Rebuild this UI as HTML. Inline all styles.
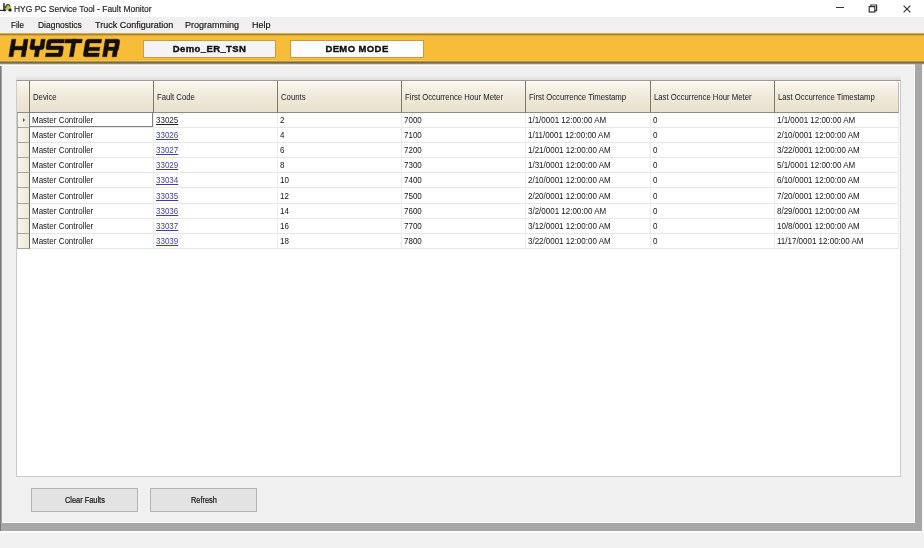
<!DOCTYPE html>
<html><head><meta charset="utf-8">
<style>
*{margin:0;padding:0;box-sizing:border-box}
html,body{width:924px;height:548px;overflow:hidden;background:#f0f0f0;font-family:"Liberation Sans",sans-serif;color:#000}
body{position:relative}
#root{position:absolute;left:0;top:0;width:924px;height:548px;overflow:hidden;background:#f0f0f0;will-change:transform}
.abs,.hdr,.rh,.cell,.focus,.btn{position:absolute}
#title{left:0;top:0;width:924px;height:17px;background:#fff}
#title .t{left:14px;top:4px;font-size:9px;white-space:nowrap;color:#1a1a1a;transform-origin:0 0;transform:scaleX(0.94);-webkit-text-stroke:0.15px #1a1a1a}
#menu{left:0;top:17px;width:924px;height:15px;background:#f0f0f0}
#menu span{position:absolute;top:3px;font-size:9px;white-space:nowrap;color:#111;transform-origin:0 0;-webkit-text-stroke:0.15px #111}
#ybar{left:0;top:32px;width:924px;height:34px;background:linear-gradient(#f6f1e4 0px,#f6f1e4 1px,#d2ab5a 1px,#d2ab5a 2px,#a8822f 2px,#a8822f 3px,#d9a836 3px,#d9a836 4px,#f7bd38 4px,#f7bd38 27px,#f4b52f 27px,#f4b52f 28px,#efc75c 28px,#efc75c 29px,#b09548 29px,#b09548 30px,#7a6a3e 30px,#7a6a3e 31px,#958667 31px,#958667 32px,#dcdad4 32px,#dcdad4 33px,#fafafa 33px,#fafafa 34px)}
.box{position:absolute;top:8px;height:18px;font-weight:bold;font-size:9.5px;letter-spacing:0.4px;text-align:center;line-height:16.5px;color:#111;-webkit-text-stroke:0.4px #111}
#gridbg{left:16px;top:80px;width:885px;height:397px;background:#fff;border:1px solid #cbcbcb;border-top-color:#9a9a9a}
.hdr{box-shadow:inset 0 1px 0 #fffdf8;background:linear-gradient(#fbf8f0,#f0e9d9 50%,#e9e1cf);border-right:1px solid #7d786a;border-bottom:1px solid #8f8b7d}
.hdr span{position:absolute;left:3px;top:10.5px;font-size:8.7px;white-space:nowrap;color:#1a1a1a;transform-origin:0 0;transform:scaleX(0.89)}
.cell{border-right:1px solid #ececec;border-bottom:1px solid #e6e6e6}
.cell span{position:absolute;left:2px;bottom:3px;font-size:8.5px;line-height:8px;white-space:nowrap;color:#141414;transform-origin:0 0;transform:scaleX(0.94)}
.rh{box-shadow:inset 1px 0 0 #b4b0a4;background:linear-gradient(90deg,#f8f5ee,#ede8da);border-right:1px solid #6f6b5f;border-bottom:1px solid #a9a597}
.arr{position:absolute;left:5.5px;top:4.5px;width:0;height:0;border-left:2.5px solid #555;border-top:2.2px solid transparent;border-bottom:2.2px solid transparent}
.focus{border:1px solid #808080}
a{color:#4040aa;text-decoration:underline}
a.v{color:#222}
.btn{top:488px;width:107px;height:24px;background:#e3e3e3;border:1px solid #b4b4b4;font-size:8.5px;text-align:center;line-height:22px;color:#222}
.btn span{display:inline-block;transform:scaleX(0.87);color:#111;-webkit-text-stroke:0.2px #111}

.hdr.first{border-top-left-radius:3px}
.hdr.last{border-top-right-radius:3px;border-right-color:#bdb9ad}

</style></head><body>
<div id="root">
<div id="title" class="abs">
  <svg class="abs" style="left:0;top:0" width="14" height="17" viewBox="0 0 14 17">
    <rect x="0" y="9.8" width="4" height="1.2" fill="#333"/>
    <rect x="3" y="3.2" width="2" height="7.6" fill="#555"/>
    <path d="M5 6 H9.5 L11.5 8 V10.5 H5 Z" fill="#c2cf4a"/>
    <path d="M5.6 8.2 Q6 4.5 8.2 4.6 Q9.8 4.8 10 6.8" fill="none" stroke="#2a2a10" stroke-width="1.1"/>
    <circle cx="10" cy="10" r="1.6" fill="#111"/>
    <circle cx="4.6" cy="10.2" r="1.2" fill="#222"/>
  </svg>
  <div class="abs t">HYG PC Service Tool - Fault Monitor</div>
  <div class="abs" style="left:836px;top:6.8px;width:8px;height:1.4px;background:#333"></div>
  <svg class="abs" style="left:868px;top:4px" width="10" height="9" viewBox="0 0 10 9"><rect x="1.2" y="2.6" width="5.6" height="5.4" fill="none" stroke="#333" stroke-width="1.2"/><path d="M2.8 2.4 V1 H8.6 V6.6 H7" fill="none" stroke="#333" stroke-width="1.2"/></svg>
  <svg class="abs" style="left:903px;top:4.5px" width="8" height="8" viewBox="0 0 8 8"><path d="M0.6 0.6 L7.4 7.4 M7.4 0.6 L0.6 7.4" stroke="#333" stroke-width="1.2"/></svg>
</div>
<div id="menu" class="abs">
  <span style="left:11px;transform:scaleX(0.9)">File</span>
  <span style="left:38px;transform:scaleX(0.94)">Diagnostics</span>
  <span style="left:95px">Truck Configuration</span>
  <span style="left:185px">Programming</span>
  <span style="left:252px">Help</span>
</div>
<div id="ybar" class="abs">
  <div class="box" style="left:143px;width:133px;background:#f4f3f6;border:1px solid #c99a3e">Demo_ER_TSN</div>
  <div class="box" style="left:290px;width:134px;background:#fdfdfd;border:1px solid #c99a3e">DEMO MODE</div>
</div>
<svg class="abs" style="left:0;top:0" width="130" height="63" viewBox="0 0 130 63">
  <g transform="matrix(1 0 -0.165 1 9.405 0)" fill="#150e06" stroke="#150e06" stroke-width="0.35">
    <rect x="8.8" y="39.2" width="4.2" height="17.6"/><rect x="21" y="39.2" width="4.2" height="17.6"/><rect x="8.8" y="46.3" width="16.4" height="3.7"/>
    <rect x="28.4" y="39.2" width="4" height="9"/><rect x="38.2" y="39.2" width="4.2" height="9"/><path d="M28.4 46 H42.4 V47.5 Q42.4 49.7 40.2 49.7 H30.6 Q28.4 49.7 28.4 47.5 Z"/><rect x="34.1" y="48" width="4.3" height="8.8"/>
    <path d="M47 39.2 H61.5 V42.9 H48.7 V46 H60 Q62 46 62 48 V54.8 Q62 56.8 60 56.8 H45.3 V53.1 H57.8 V49.7 H46.5 Q44.5 49.7 44.5 47.7 V41.7 Q44.5 39.2 47 39.2 Z"/>
    <rect x="62.3" y="39.2" width="17.1" height="3.8"/><rect x="69.3" y="39.2" width="4.1" height="17.6"/>
    <path d="M85.4 39.2 H98.8 V43 H87.3 V47.2 H98.3 V50.8 H87.3 V53.1 H98.7 V56.8 H85.4 Q82.9 56.8 82.9 54.3 V41.7 Q82.9 39.2 85.4 39.2 Z"/>
    <path d="M102.4 39.2 H114.7 Q117.2 39.2 117.2 41.7 V49 Q117.2 50.5 116.4 50.8 V56.8 H112 V50.5 H106.8 V56.8 H102.4 Z M106.8 43 V47 H112.9 V43 Z" fill-rule="evenodd"/>
  </g>
</svg>
<div class="abs" style="left:16px;top:75px;width:885px;height:5px;background:linear-gradient(#f0f0f0,#dedede)"></div>
<div id="gridbg" class="abs"></div>
<div class="hdr first" style="left:17px;top:81px;width:13px;height:32px"></div>
<div class="hdr" style="left:30px;top:81px;width:124px;height:32px"><span>Device</span></div>
<div class="hdr" style="left:154px;top:81px;width:124px;height:32px"><span>Fault Code</span></div>
<div class="hdr" style="left:278px;top:81px;width:124px;height:32px"><span>Counts</span></div>
<div class="hdr" style="left:402px;top:81px;width:124px;height:32px"><span>First Occurrence Hour Meter</span></div>
<div class="hdr" style="left:526px;top:81px;width:125px;height:32px"><span>First Occurrence Timestamp</span></div>
<div class="hdr" style="left:651px;top:81px;width:124px;height:32px"><span>Last Occurrence Hour Meter</span></div>
<div class="hdr last" style="left:775px;top:81px;width:124px;height:32px"><span>Last Occurrence Timestamp</span></div>
<div class="rh" style="left:17px;top:113px;width:13px;height:15px"><i class="arr"></i></div>
<div class="cell" style="left:30px;top:113px;width:124px;height:15px"><span style="left:1.5px">Master Controller</span></div>
<div class="cell" style="left:154px;top:113px;width:124px;height:15px"><span><a class="v">33025</a></span></div>
<div class="cell" style="left:278px;top:113px;width:124px;height:15px"><span>2</span></div>
<div class="cell" style="left:402px;top:113px;width:124px;height:15px"><span>7000</span></div>
<div class="cell" style="left:526px;top:113px;width:125px;height:15px"><span>1/1/0001 12:00:00 AM</span></div>
<div class="cell" style="left:651px;top:113px;width:124px;height:15px"><span>0</span></div>
<div class="cell" style="left:775px;top:113px;width:124px;height:15px"><span>1/1/0001 12:00:00 AM</span></div>
<div class="rh" style="left:17px;top:128px;width:13px;height:15px"></div>
<div class="cell" style="left:30px;top:128px;width:124px;height:15px"><span style="left:1.5px">Master Controller</span></div>
<div class="cell" style="left:154px;top:128px;width:124px;height:15px"><span><a class="">33026</a></span></div>
<div class="cell" style="left:278px;top:128px;width:124px;height:15px"><span>4</span></div>
<div class="cell" style="left:402px;top:128px;width:124px;height:15px"><span>7100</span></div>
<div class="cell" style="left:526px;top:128px;width:125px;height:15px"><span>1/11/0001 12:00:00 AM</span></div>
<div class="cell" style="left:651px;top:128px;width:124px;height:15px"><span>0</span></div>
<div class="cell" style="left:775px;top:128px;width:124px;height:15px"><span>2/10/0001 12:00:00 AM</span></div>
<div class="rh" style="left:17px;top:143px;width:13px;height:15px"></div>
<div class="cell" style="left:30px;top:143px;width:124px;height:15px"><span style="left:1.5px">Master Controller</span></div>
<div class="cell" style="left:154px;top:143px;width:124px;height:15px"><span><a class="">33027</a></span></div>
<div class="cell" style="left:278px;top:143px;width:124px;height:15px"><span>6</span></div>
<div class="cell" style="left:402px;top:143px;width:124px;height:15px"><span>7200</span></div>
<div class="cell" style="left:526px;top:143px;width:125px;height:15px"><span>1/21/0001 12:00:00 AM</span></div>
<div class="cell" style="left:651px;top:143px;width:124px;height:15px"><span>0</span></div>
<div class="cell" style="left:775px;top:143px;width:124px;height:15px"><span>3/22/0001 12:00:00 AM</span></div>
<div class="rh" style="left:17px;top:158px;width:13px;height:15px"></div>
<div class="cell" style="left:30px;top:158px;width:124px;height:15px"><span style="left:1.5px">Master Controller</span></div>
<div class="cell" style="left:154px;top:158px;width:124px;height:15px"><span><a class="">33029</a></span></div>
<div class="cell" style="left:278px;top:158px;width:124px;height:15px"><span>8</span></div>
<div class="cell" style="left:402px;top:158px;width:124px;height:15px"><span>7300</span></div>
<div class="cell" style="left:526px;top:158px;width:125px;height:15px"><span>1/31/0001 12:00:00 AM</span></div>
<div class="cell" style="left:651px;top:158px;width:124px;height:15px"><span>0</span></div>
<div class="cell" style="left:775px;top:158px;width:124px;height:15px"><span>5/1/0001 12:00:00 AM</span></div>
<div class="rh" style="left:17px;top:173px;width:13px;height:15px"></div>
<div class="cell" style="left:30px;top:173px;width:124px;height:15px"><span style="left:1.5px">Master Controller</span></div>
<div class="cell" style="left:154px;top:173px;width:124px;height:15px"><span><a class="">33034</a></span></div>
<div class="cell" style="left:278px;top:173px;width:124px;height:15px"><span>10</span></div>
<div class="cell" style="left:402px;top:173px;width:124px;height:15px"><span>7400</span></div>
<div class="cell" style="left:526px;top:173px;width:125px;height:15px"><span>2/10/0001 12:00:00 AM</span></div>
<div class="cell" style="left:651px;top:173px;width:124px;height:15px"><span>0</span></div>
<div class="cell" style="left:775px;top:173px;width:124px;height:15px"><span>6/10/0001 12:00:00 AM</span></div>
<div class="rh" style="left:17px;top:188px;width:13px;height:16px"></div>
<div class="cell" style="left:30px;top:188px;width:124px;height:16px"><span style="left:1.5px">Master Controller</span></div>
<div class="cell" style="left:154px;top:188px;width:124px;height:16px"><span><a class="">33035</a></span></div>
<div class="cell" style="left:278px;top:188px;width:124px;height:16px"><span>12</span></div>
<div class="cell" style="left:402px;top:188px;width:124px;height:16px"><span>7500</span></div>
<div class="cell" style="left:526px;top:188px;width:125px;height:16px"><span>2/20/0001 12:00:00 AM</span></div>
<div class="cell" style="left:651px;top:188px;width:124px;height:16px"><span>0</span></div>
<div class="cell" style="left:775px;top:188px;width:124px;height:16px"><span>7/20/0001 12:00:00 AM</span></div>
<div class="rh" style="left:17px;top:204px;width:13px;height:15px"></div>
<div class="cell" style="left:30px;top:204px;width:124px;height:15px"><span style="left:1.5px">Master Controller</span></div>
<div class="cell" style="left:154px;top:204px;width:124px;height:15px"><span><a class="">33036</a></span></div>
<div class="cell" style="left:278px;top:204px;width:124px;height:15px"><span>14</span></div>
<div class="cell" style="left:402px;top:204px;width:124px;height:15px"><span>7600</span></div>
<div class="cell" style="left:526px;top:204px;width:125px;height:15px"><span>3/2/0001 12:00:00 AM</span></div>
<div class="cell" style="left:651px;top:204px;width:124px;height:15px"><span>0</span></div>
<div class="cell" style="left:775px;top:204px;width:124px;height:15px"><span>8/29/0001 12:00:00 AM</span></div>
<div class="rh" style="left:17px;top:219px;width:13px;height:15px"></div>
<div class="cell" style="left:30px;top:219px;width:124px;height:15px"><span style="left:1.5px">Master Controller</span></div>
<div class="cell" style="left:154px;top:219px;width:124px;height:15px"><span><a class="">33037</a></span></div>
<div class="cell" style="left:278px;top:219px;width:124px;height:15px"><span>16</span></div>
<div class="cell" style="left:402px;top:219px;width:124px;height:15px"><span>7700</span></div>
<div class="cell" style="left:526px;top:219px;width:125px;height:15px"><span>3/12/0001 12:00:00 AM</span></div>
<div class="cell" style="left:651px;top:219px;width:124px;height:15px"><span>0</span></div>
<div class="cell" style="left:775px;top:219px;width:124px;height:15px"><span>10/8/0001 12:00:00 AM</span></div>
<div class="rh" style="left:17px;top:234px;width:13px;height:15px"></div>
<div class="cell" style="left:30px;top:234px;width:124px;height:15px"><span style="left:1.5px">Master Controller</span></div>
<div class="cell" style="left:154px;top:234px;width:124px;height:15px"><span><a class="">33039</a></span></div>
<div class="cell" style="left:278px;top:234px;width:124px;height:15px"><span>18</span></div>
<div class="cell" style="left:402px;top:234px;width:124px;height:15px"><span>7800</span></div>
<div class="cell" style="left:526px;top:234px;width:125px;height:15px"><span>3/22/0001 12:00:00 AM</span></div>
<div class="cell" style="left:651px;top:234px;width:124px;height:15px"><span>0</span></div>
<div class="cell" style="left:775px;top:234px;width:124px;height:15px"><span>11/17/0001 12:00:00 AM</span></div>
<div class="focus" style="left:29px;top:112px;width:124px;height:15px"></div>
<div class="btn" style="left:31px"><span>Clear Faults</span></div>
<div class="btn" style="left:150px"><span>Refresh</span></div>
<div class="abs" style="left:0;top:66px;width:3px;height:466px;background:linear-gradient(90deg,#6a6a6a,#a0a0a0 1.5px,#f3f3f3 2.5px)"></div>
<div class="abs" style="left:914px;top:66px;width:1px;height:457px;background:#fbfbfb"></div>
<div class="abs" style="left:915px;top:64px;width:7px;height:467px;background:#a7a7a7"></div>
<div class="abs" style="left:3px;top:522px;width:912px;height:1px;background:#fbfbfb"></div>
<div class="abs" style="left:0;top:523px;width:922px;height:8px;background:#a7a7a7"></div>
<div class="abs" style="left:0;top:531px;width:924px;height:2px;background:#fbfbfb"></div>
<div class="abs" style="left:922px;top:66px;width:2px;height:465px;background:#f8f8f8"></div>
<div class="abs" style="left:0;top:523px;width:1px;height:8px;background:#777"></div>

</div>
</body></html>
